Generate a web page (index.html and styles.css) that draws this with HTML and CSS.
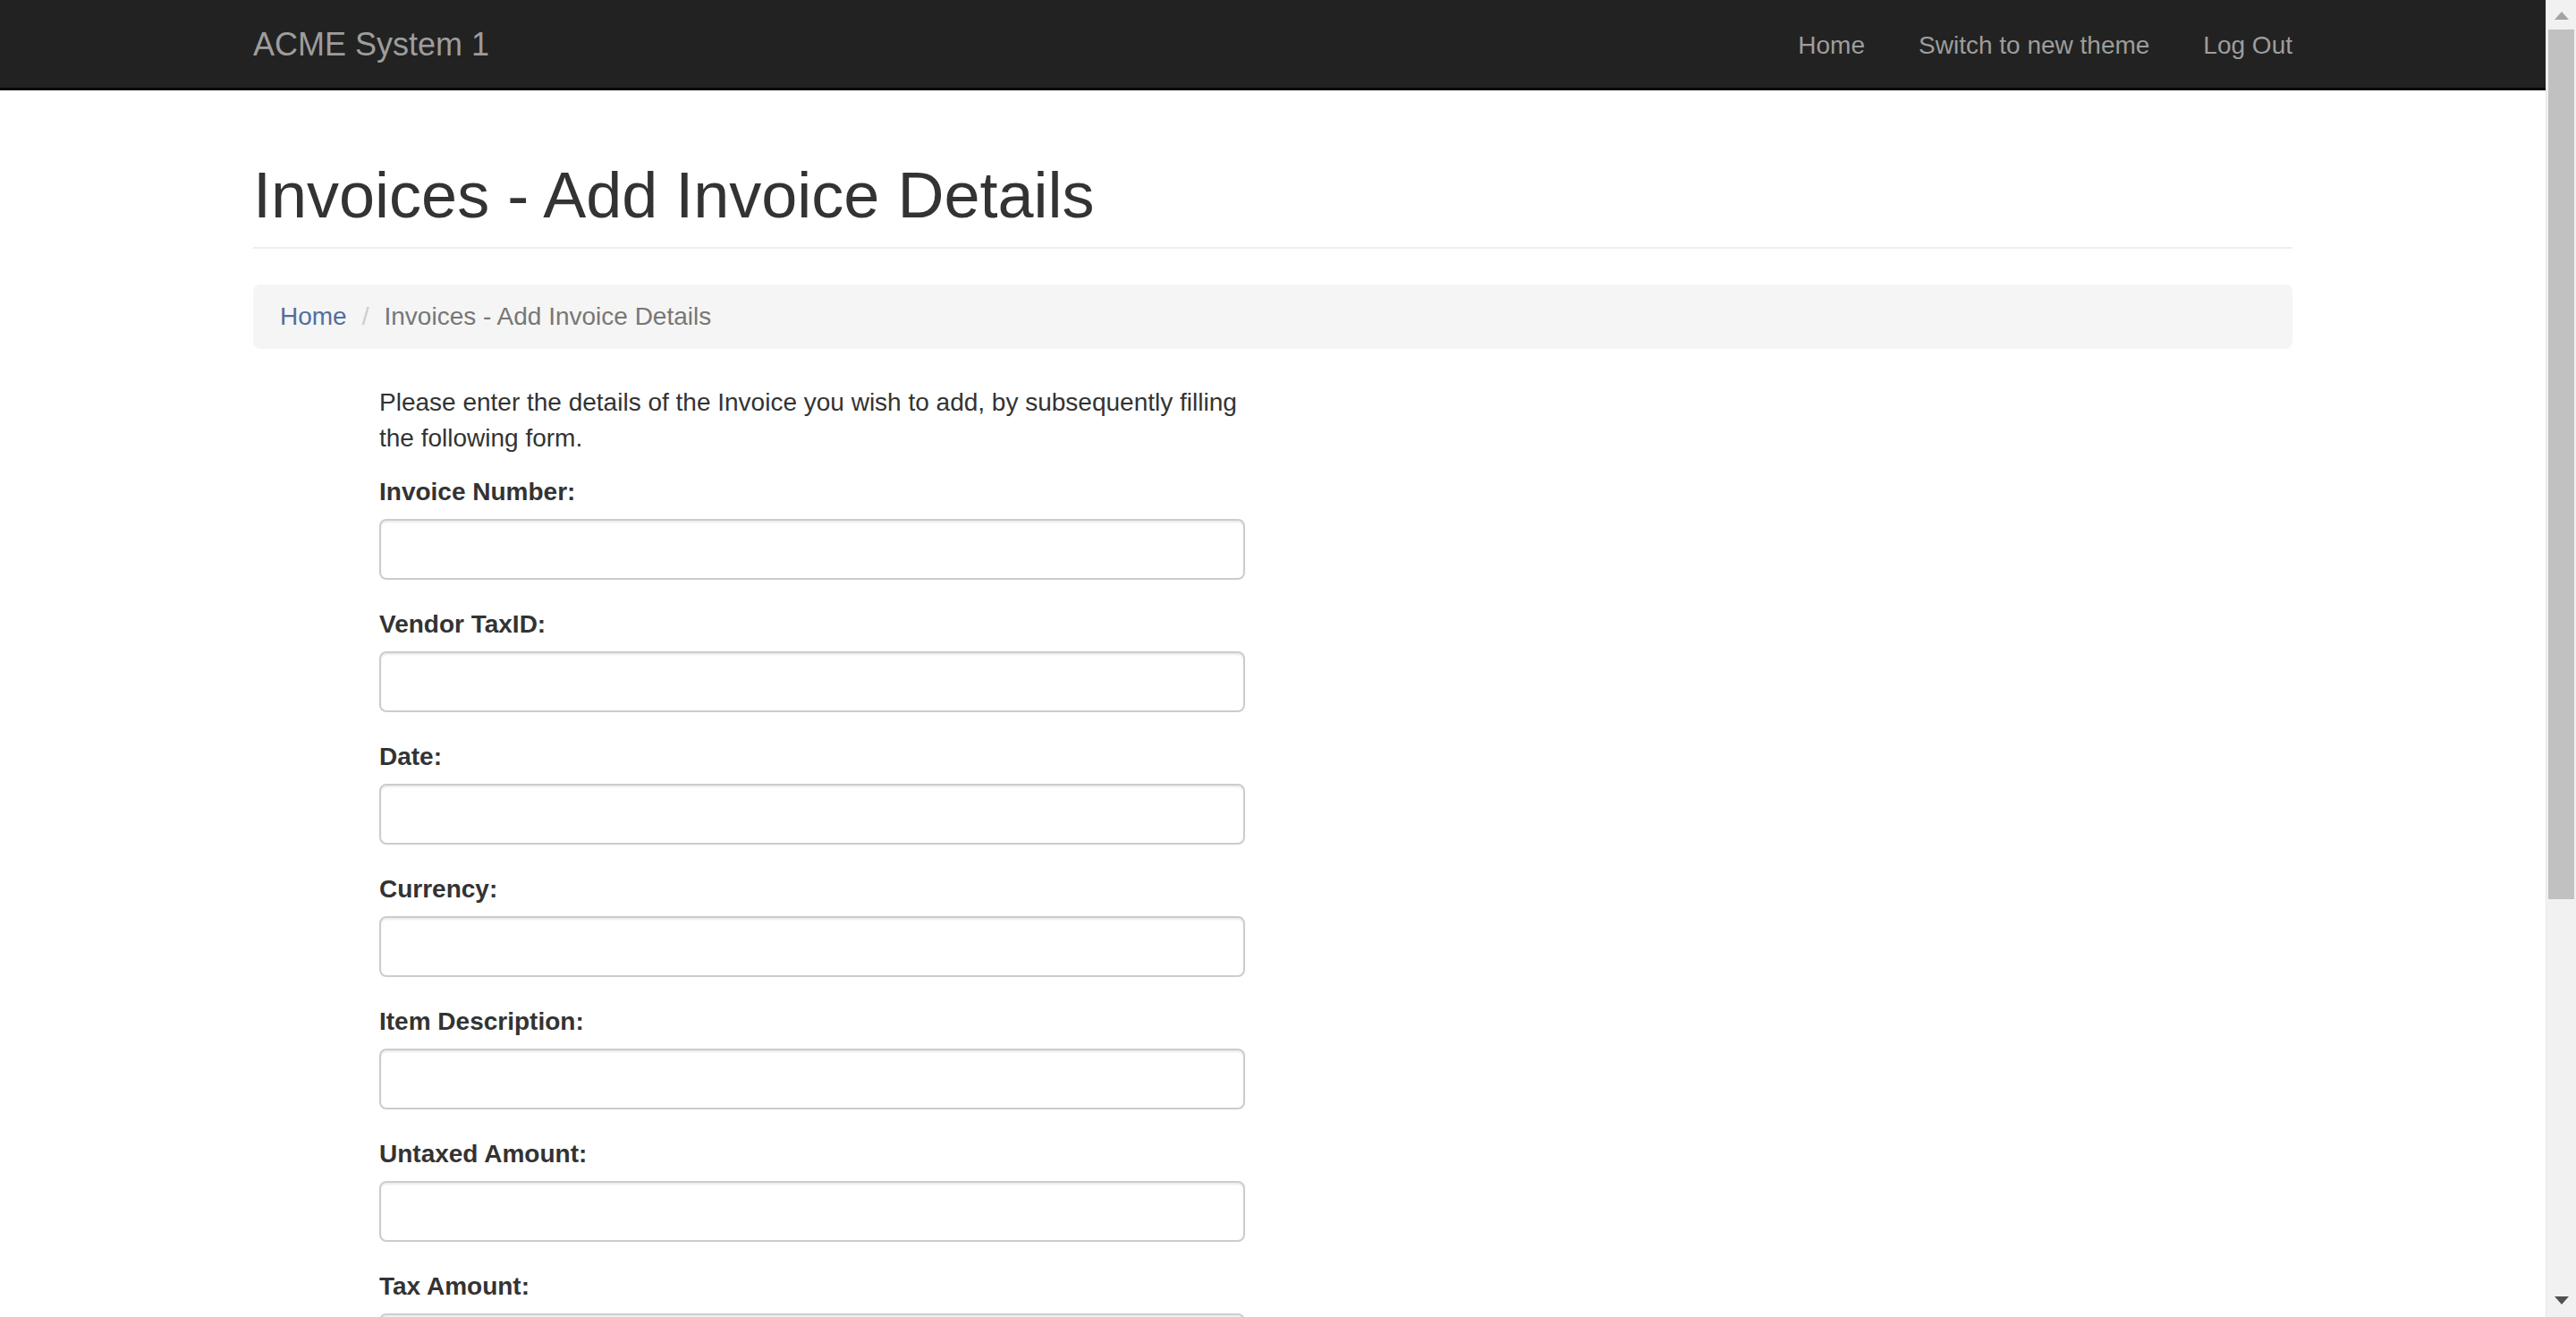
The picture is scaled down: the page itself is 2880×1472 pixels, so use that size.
FILE: index.html
```html
<!DOCTYPE html>
<html lang="en">
<head>
<meta charset="utf-8">
<title>Invoices - Add Invoice Details</title>
<link rel="stylesheet" href="styles.css">
</head>
<body>
<div class="page">
  <nav class="navbar">
    <div class="container nav-inner">
      <a class="brand" href="#">ACME System 1</a>
      <ul class="nav-links">
        <li><a href="#">Home</a></li>
        <li><a href="#">Switch to new theme</a></li>
        <li><a href="#">Log Out</a></li>
      </ul>
    </div>
  </nav>
  <main class="container">
    <div class="page-header">
      <h1>Invoices - Add Invoice Details</h1>
    </div>
    <ol class="breadcrumb">
      <li><a href="#">Home</a></li>
      <li class="sep">/</li>
      <li class="active">Invoices - Add Invoice Details</li>
    </ol>
    <form class="invoice-form">
      <p class="intro">Please enter the details of the Invoice you wish to add, by subsequently filling the following form.</p>
      <div class="form-group"><label>Invoice Number:</label><input class="form-control" type="text"></div>
      <div class="form-group"><label>Vendor TaxID:</label><input class="form-control" type="text"></div>
      <div class="form-group"><label>Date:</label><input class="form-control" type="text"></div>
      <div class="form-group"><label>Currency:</label><input class="form-control" type="text"></div>
      <div class="form-group"><label>Item Description:</label><input class="form-control" type="text"></div>
      <div class="form-group"><label>Untaxed Amount:</label><input class="form-control" type="text"></div>
      <div class="form-group"><label>Tax Amount:</label><input class="form-control" type="text"></div>
    </form>
  </main>
</div>
<div class="scrollbar">
  <div class="arrow up"></div>
  <div class="thumb"></div>
  <div class="track"></div>
  <div class="arrow down"></div>
</div>
</body>
</html>
```
FILE: styles.css
```css
html, body {
  margin: 0;
  padding: 0;
}
body {
  display: flex;
  height: 1472px;
  overflow: hidden;
  font-family: "Liberation Sans", Arial, Helvetica, sans-serif;
  font-size: 28px;
  line-height: 40px;
  color: #333;
  background: #fff;
}
.page {
  flex: 1;
  min-width: 0;
  overflow: hidden;
}
.container {
  width: 2280px;
  margin: 0 auto;
}
.navbar {
  background: #222;
  height: 98px;
  border-bottom: 3px solid #080808;
}
.nav-inner {
  display: flex;
  justify-content: space-between;
  align-items: flex-start;
}
.brand {
  display: block;
  font-size: 36px;
  line-height: 40px;
  padding: 30px 30px 28px;
  margin-left: -30px;
  color: #9d9d9d;
  text-decoration: none;
}
.nav-links {
  display: flex;
  list-style: none;
  margin: 0 -30px 0 0;
  padding: 0;
}
.nav-links a {
  display: block;
  padding: 31px 30px 27px;
  line-height: 40px;
  color: #9d9d9d;
  text-decoration: none;
}
.page-header {
  margin: 78px 0 40px;
  padding-bottom: 18px;
  border-bottom: 2px solid #eee;
}
.page-header h1 {
  margin: 0;
  font-size: 72px;
  line-height: 79px;
  font-weight: 500;
  color: #333;
}
.breadcrumb {
  display: flex;
  list-style: none;
  margin: 0 0 40px;
  padding: 16px 30px;
  background: #f5f5f5;
  border-radius: 8px;
}
.breadcrumb a {
  color: #4f6f9f;
  text-decoration: none;
}
.breadcrumb .sep {
  color: #ccc;
  padding: 0 17px;
}
.breadcrumb .active {
  color: #777;
}
.invoice-form {
  width: 968px;
  margin-left: 141px;
}
.intro {
  margin: 0 0 20px;
}
.form-group {
  margin-bottom: 30px;
}
.form-group label {
  display: block;
  font-weight: bold;
  margin-bottom: 10px;
}
.form-control {
  display: block;
  box-sizing: border-box;
  width: 100%;
  height: 68px;
  padding: 12px 24px;
  font: inherit;
  border: 2px solid #ccc;
  border-radius: 8px;
  background: #fff;
  box-shadow: inset 0 2px 2px rgba(0, 0, 0, 0.075);
  margin: 0;
}
.scrollbar {
  width: 33px;
  flex: none;
  background: #f1f1f1;
  display: flex;
  flex-direction: column;
  align-items: center;
  border-left: 1px solid #e8e8e8;
}
.arrow {
  width: 0;
  height: 0;
  border-left: 8px solid transparent;
  border-right: 8px solid transparent;
}
.arrow.up {
  margin: 13px 0 0;
  border-bottom: 9px solid #a3a3a3;
}
.arrow.down {
  margin: 0 0 14px;
  border-top: 9px solid #505050;
}
.thumb {
  margin-top: 11px;
  width: 29px;
  height: 972px;
  background: #c1c1c1;
}
.track {
  flex: 1;
}
```
